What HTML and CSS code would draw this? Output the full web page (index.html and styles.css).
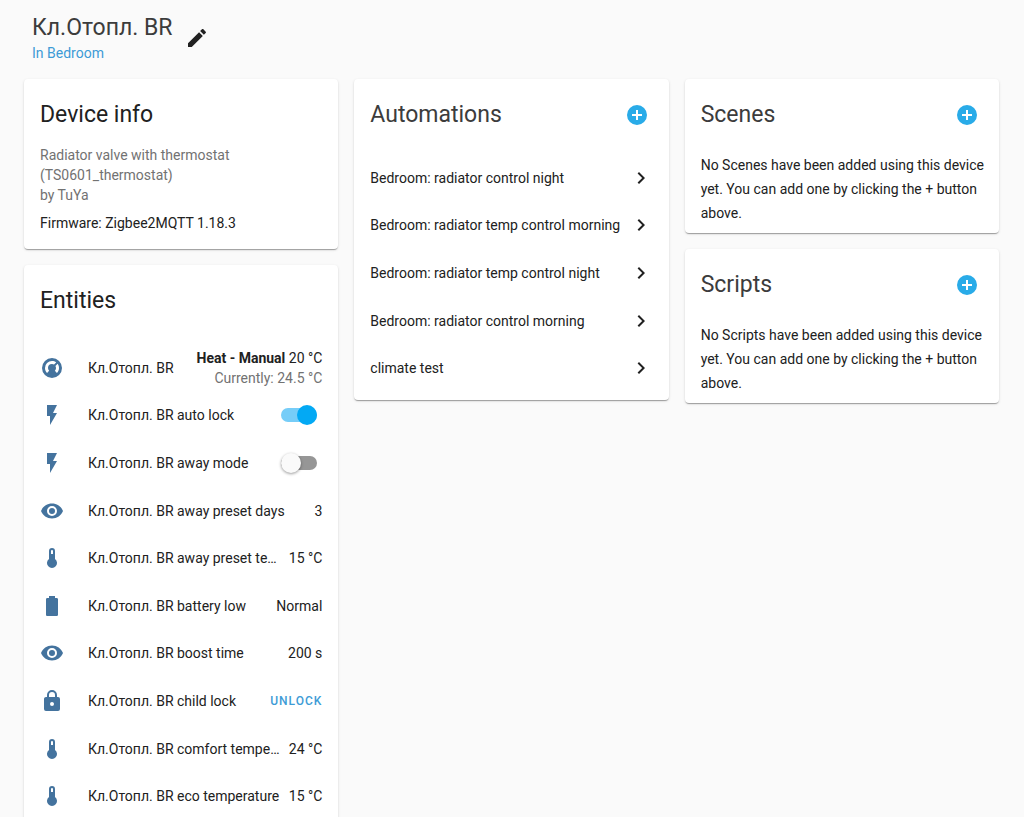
FILE: index.html
```
<!DOCTYPE html>
<html lang="en">
<head>
    <meta charset="UTF-8">
    <meta name="viewport" content="width=device-width, initial-scale=1.0">
    <title>Кл.Отопл. BR</title>
    <link rel="stylesheet" href="styles.css">
</head>
<body>
    <!-- Icon set -->
    <svg class="sprite" aria-hidden="true">
        <symbol id="pencil" viewBox="0 0 24 24"><path d="M20.71,7.04C21.1,6.65 21.1,6 20.71,5.63L18.37,3.29C18,2.9 17.35,2.9 16.96,3.29L15.12,5.12L18.87,8.87M3,17.25V21H6.75L17.81,9.93L14.06,6.18L3,17.25Z"/></symbol>
        <symbol id="plus-circle" viewBox="0 0 24 24"><path d="M17,13H13V17H11V13H7V11H11V7H13V11H17M12,2A10,10 0 0,0 2,12A10,10 0 0,0 12,22A10,10 0 0,0 22,12A10,10 0 0,0 12,2Z"/></symbol>
        <symbol id="chevron" viewBox="0 0 24 24"><path d="M8.59,16.58L13.17,12L8.59,7.41L10,6L16,12L10,18L8.59,16.58Z"/></symbol>
        <symbol id="thermostat" viewBox="0 0 24 24"><path d="M16.95,16.95L14.83,14.83C15.55,14.1 16,13.1 16,12C16,11.26 15.79,10.57 15.43,10L17.6,7.81C18.5,9 19,10.43 19,12C19,13.93 18.22,15.68 16.95,16.95M12,5C13.57,5 15,5.5 16.19,6.4L14,8.56C13.43,8.21 12.74,8 12,8A4,4 0 0,0 8,12C8,13.1 8.45,14.1 9.17,14.83L7.05,16.95C5.78,15.68 5,13.93 5,12A7,7 0 0,1 12,5M12,2A10,10 0 0,0 2,12A10,10 0 0,0 12,22A10,10 0 0,0 22,12A10,10 0 0,0 12,2Z"/></symbol>
        <symbol id="flash" viewBox="0 0 24 24"><path d="M7,2V13H10V22L17,10H13L17,2H7Z"/></symbol>
        <symbol id="eye" viewBox="0 0 24 24"><path d="M12,9A3,3 0 0,0 9,12A3,3 0 0,0 12,15A3,3 0 0,0 15,12A3,3 0 0,0 12,9M12,17A5,5 0 0,1 7,12A5,5 0 0,1 12,7A5,5 0 0,1 17,12A5,5 0 0,1 12,17M12,4.5C7,4.5 2.73,7.61 1,12C2.73,16.39 7,19.5 12,19.5C17,19.5 21.27,16.39 23,12C21.27,7.61 17,4.5 12,4.5Z"/></symbol>
        <symbol id="thermometer" viewBox="0 0 24 24"><path d="M15 13V5A3 3 0 0 0 9 5V13A5 5 0 1 0 15 13M12 4A1 1 0 0 1 13 5V8H11V5A1 1 0 0 1 12 4Z"/></symbol>
        <symbol id="battery" viewBox="0 0 24 24"><path d="M16.67,4H15V2H9V4H7.33A1.33,1.33 0 0,0 6,5.33V20.67C6,21.4 6.6,22 7.33,22H16.67A1.33,1.33 0 0,0 18,20.67V5.33C18,4.6 17.4,4 16.67,4Z"/></symbol>
        <symbol id="lock" viewBox="0 0 24 24"><path d="M12,17A2,2 0 0,0 14,15C14,13.89 13.1,13 12,13A2,2 0 0,0 10,15A2,2 0 0,0 12,17M18,8A2,2 0 0,1 20,10V20A2,2 0 0,1 18,22H6A2,2 0 0,1 4,20V10C4,8.89 4.9,8 6,8H7V6A5,5 0 0,1 12,1A5,5 0 0,1 17,6V8H18M12,3A3,3 0 0,0 9,6V8H15V6A3,3 0 0,0 12,3Z"/></symbol>
    </svg>

    <header class="header">
        <div>
            <h1>Кл.Отопл. BR</h1>
            <a class="area" href="#">In Bedroom</a>
        </div>
        <button class="icon-btn" type="button" aria-label="Edit"><svg class="icon"><use href="#pencil"/></svg></button>
    </header>

    <main class="columns">
        <div class="column">
            <section class="card device">
                <h2>Device info</h2>
                <p class="model">Radiator valve with thermostat (TS0601_thermostat)<br>by TuYa</p>
                <p class="firmware">Firmware: Zigbee2MQTT 1.18.3</p>
            </section>

            <section class="card entities">
                <h2>Entities</h2>
                <ul class="rows">
                    <li class="row">
                        <svg class="icon"><use href="#thermostat"/></svg>
                        <span class="name">Кл.Отопл. BR</span>
                        <span class="climate"><span><b>Heat - Manual</b> 20 °C</span><span class="current">Currently: 24.5 °C</span></span>
                    </li>
                    <li class="row">
                        <svg class="icon"><use href="#flash"/></svg>
                        <label class="name" for="auto-lock">Кл.Отопл. BR auto lock</label>
                        <input class="toggle" type="checkbox" id="auto-lock" checked>
                    </li>
                    <li class="row">
                        <svg class="icon"><use href="#flash"/></svg>
                        <label class="name" for="away-mode">Кл.Отопл. BR away mode</label>
                        <input class="toggle" type="checkbox" id="away-mode">
                    </li>
                    <li class="row">
                        <svg class="icon"><use href="#eye"/></svg>
                        <span class="name">Кл.Отопл. BR away preset days</span>
                        <span class="state">3</span>
                    </li>
                    <li class="row">
                        <svg class="icon"><use href="#thermometer"/></svg>
                        <span class="name">Кл.Отопл. BR away preset te…</span>
                        <span class="state">15 °C</span>
                    </li>
                    <li class="row">
                        <svg class="icon"><use href="#battery"/></svg>
                        <span class="name">Кл.Отопл. BR battery low</span>
                        <span class="state">Normal</span>
                    </li>
                    <li class="row">
                        <svg class="icon"><use href="#eye"/></svg>
                        <span class="name">Кл.Отопл. BR boost time</span>
                        <span class="state">200 s</span>
                    </li>
                    <li class="row">
                        <svg class="icon"><use href="#lock"/></svg>
                        <span class="name">Кл.Отопл. BR child lock</span>
                        <button class="text-btn" type="button">UNLOCK</button>
                    </li>
                    <li class="row">
                        <svg class="icon"><use href="#thermometer"/></svg>
                        <span class="name">Кл.Отопл. BR comfort tempe…</span>
                        <span class="state">24 °C</span>
                    </li>
                    <li class="row">
                        <svg class="icon"><use href="#thermometer"/></svg>
                        <span class="name">Кл.Отопл. BR eco temperature</span>
                        <span class="state">15 °C</span>
                    </li>
                </ul>
            </section>
        </div>

        <div class="column">
            <section class="card automations">
                <div class="card-header">
                    <h2>Automations</h2>
                    <button class="icon-btn add" type="button" aria-label="Add automation"><svg class="icon"><use href="#plus-circle"/></svg></button>
                </div>
                <nav class="links">
                    <a href="#">Bedroom: radiator control night<svg class="icon"><use href="#chevron"/></svg></a>
                    <a href="#">Bedroom: radiator temp control morning<svg class="icon"><use href="#chevron"/></svg></a>
                    <a href="#">Bedroom: radiator temp control night<svg class="icon"><use href="#chevron"/></svg></a>
                    <a href="#">Bedroom: radiator control morning<svg class="icon"><use href="#chevron"/></svg></a>
                    <a href="#">climate test<svg class="icon"><use href="#chevron"/></svg></a>
                </nav>
            </section>
        </div>

        <div class="column">
            <section class="card">
                <div class="card-header">
                    <h2>Scenes</h2>
                    <button class="icon-btn add" type="button" aria-label="Add scene"><svg class="icon"><use href="#plus-circle"/></svg></button>
                </div>
                <p class="empty">No Scenes have been added using this device yet. You can add one by clicking the + button above.</p>
            </section>

            <section class="card">
                <div class="card-header">
                    <h2>Scripts</h2>
                    <button class="icon-btn add" type="button" aria-label="Add script"><svg class="icon"><use href="#plus-circle"/></svg></button>
                </div>
                <p class="empty">No Scripts have been added using this device yet. You can add one by clicking the + button above.</p>
            </section>
        </div>
    </main>
</body>
</html>
```
FILE: styles.css
```
* {
    margin: 0;
    padding: 0;
    box-sizing: border-box;
}

body {
    background: #fafafa;
    color: #212121;
    font-family: Roboto, "Noto Sans", sans-serif;
    font-size: 14px;
    line-height: 20px;
}

a {
    color: inherit;
    text-decoration: none;
}

button {
    border: none;
    background: none;
    font-family: inherit;
    cursor: pointer;
}

.sprite {
    display: none;
}

.icon {
    width: 24px;
    height: 24px;
    flex: none;
    fill: currentColor;
}

.icon-btn {
    display: flex;
    align-items: center;
    justify-content: center;
    width: 48px;
    height: 48px;
    color: #212121;
}

/* Header */
.header {
    display: flex;
    align-items: center;
    padding: 13px 32px 16px;
}

h1, h2 {
    font-size: 23px;
    font-weight: 400;
}

h1 {
    color: #3c3c3c;
    line-height: 30px;
}

.area {
    display: block;
    color: #3d9bd6;
}

/* Cards */
.columns {
    display: grid;
    grid-template-columns: repeat(3, 1fr);
    align-items: start;
    gap: 16px;
    padding: 0 25px 16px 24px;
}

.column {
    display: grid;
    gap: 16px;
    min-width: 0;
}

.card {
    min-width: 0;
    padding: 12px 16px 8px;
    background: #fff;
    border-radius: 4px;
    box-shadow: 0 2px 1px -1px rgba(0, 0, 0, 0.2), 0 1px 1px 0 rgba(0, 0, 0, 0.14), 0 1px 3px 0 rgba(0, 0, 0, 0.12);
}

.card h2 {
    line-height: 48px;
}

.card-header {
    display: flex;
    justify-content: space-between;
    margin-right: -8px;
}

.card-header h2 {
    color: #3c3c3c;
}

.add {
    color: #29abe8;
}

/* Device info */
.device {
    padding-bottom: 16px;
}

.model {
    margin-top: 6px;
    color: #727272;
}

.firmware {
    margin-top: 8px;
}

/* Entities */
.rows {
    display: grid;
    grid-auto-rows: 1fr;
    min-height: 476px;
    margin-top: 19px;
    list-style: none;
}

.row {
    display: flex;
    align-items: center;
    min-width: 0;
}

.row .icon {
    margin-right: 24px;
    color: #44739e;
}

.name {
    flex: 1;
    overflow: hidden;
    text-overflow: ellipsis;
    white-space: nowrap;
}

.state {
    margin-left: 4px;
}

.climate {
    display: flex;
    flex-direction: column;
    text-align: right;
}

.climate b {
    font-weight: 700;
}

.current {
    color: #727272;
}

.toggle {
    appearance: none;
    display: flex;
    align-items: center;
    width: 36px;
    height: 14px;
    margin-right: 5px;
    border-radius: 7px;
    background: #969696;
    cursor: pointer;
}

.toggle::before {
    content: "";
    width: 20px;
    height: 20px;
    flex: none;
    border-radius: 50%;
    background: #fafafa;
    box-shadow: 0 1px 3px rgba(0, 0, 0, 0.4);
}

.toggle:checked {
    justify-content: flex-end;
    background: #76cdf8;
}

.toggle:checked::before {
    background: #03a9f4;
    box-shadow: none;
}

.text-btn {
    color: #3d9bd6;
    font-size: 12px;
    font-weight: 500;
    letter-spacing: 1px;
}

/* Automations */
.links {
    display: grid;
    grid-auto-rows: 1fr;
    min-height: 238px;
    margin-top: 15px;
}

.links a {
    display: flex;
    align-items: center;
    justify-content: space-between;
}

/* Scenes and scripts */
.empty {
    margin-top: 14px;
    margin-right: -8px;
    line-height: 24px;
}
```
